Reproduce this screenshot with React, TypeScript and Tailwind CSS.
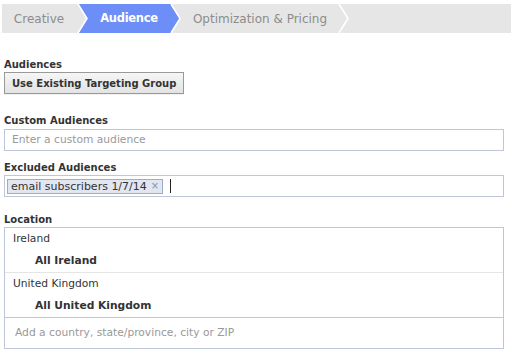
const font = { fontFamily: '"DejaVu Sans", "Lucida Grande", sans-serif' }

function SepInto({ fill }: { fill: string }) {
  // separator whose right side is filled (active segment starts here)
  return (
    <svg width="12" height="29" viewBox="0 0 12 29" className="shrink-0 block">
      <polygon points="2,0 12,0 12,29 2,29 11,14.5" fill={fill} />
      <polyline points="2,0 11,14.5 2,29" fill="none" stroke="#fff" strokeWidth="1.6" />
    </svg>
  )
}

function SepOut({ fill }: { fill: string }) {
  // separator whose left side is filled (active segment ends here)
  return (
    <svg width="12" height="29" viewBox="0 0 12 29" className="shrink-0 block">
      {fill !== 'none' && <polygon points="0,0 1,0 10,14.5 1,29 0,29" fill={fill} />}
      <polyline points="1,0 10,14.5 1,29" fill="none" stroke="#fff" strokeWidth="1.6" />
    </svg>
  )
}

export default function App() {
  return (
    <div className="w-[511px] h-[356px] bg-white text-[#333] overflow-hidden" style={font}>
      {/* Steps */}
      <div className="mt-[4px] ml-[2px] h-[29px] bg-[#e6e6e6] flex items-stretch text-[12px]">
        <div className="w-[74px] flex items-center justify-center text-[#8c8c8c]">Creative</div>
        <SepInto fill="#6c8ef6" />
        <div className="w-[82px] flex items-center justify-center bg-[#6c8ef6] text-white font-bold text-[11.5px] tracking-[-0.3px]">Audience</div>
        <SepOut fill="#6c8ef6" />
        <div className="w-[156px] flex items-center justify-center text-[#8c8c8c]">Optimization &amp; Pricing</div>
        <SepOut fill="none" />
      </div>

      <div className="px-[4px] text-[10.7px]">
        <div className="mt-[25px] font-bold text-[10px] leading-[14px]">Audiences</div>
        <button className="h-[22px] px-[7px] border border-[#999] bg-gradient-to-b from-[#f6f6f6] to-[#e3e3e3] font-bold text-[10px] text-[#333] shadow-[0_1px_0_rgba(0,0,0,0.05)]">
          Use Existing Targeting Group
        </button>

        <div className="mt-[20px] font-bold text-[10px] leading-[14px]">Custom Audiences</div>
        <div className="mt-[1px] w-[500px] h-[22px] border border-[#bdc7d8] flex items-center px-[7px] text-[#999]">
          Enter a custom audience
        </div>

        <div className="mt-[10px] font-bold text-[10px] leading-[14px]">Excluded Audiences</div>
        <div className="w-[500px] h-[22px] border border-[#bdc7d8] flex items-center px-[2px]">
          <span className="h-[15px] flex items-center gap-[4px] px-[3px] bg-[#e2e6f0] border border-[#9dacc9] text-[#333] text-[11px] leading-none">
            email subscribers 1/7/14
            <span className="text-[#9aa6bf] text-[10px] font-bold">×</span>
          </span>
          <span className="ml-[7px] w-px h-[14px] bg-[#222]" />
        </div>

        <div className="mt-[16px] font-bold text-[10px] leading-[14px]">Location</div>
        <div className="w-[500px] border border-[#bdc7d8]">
          <div className="h-[45px] flex flex-col border-b border-[#e5e5e5]">
            <div className="h-[22px] flex items-center pl-[8px]">Ireland</div>
            <div className="h-[22px] flex items-center pl-[30px] font-bold">All Ireland</div>
          </div>
          <div className="h-[45px] flex flex-col border-b border-[#bdc7d8]">
            <div className="h-[22px] flex items-center pl-[8px]">United Kingdom</div>
            <div className="h-[22px] flex items-center pl-[30px] font-bold">All United Kingdom</div>
          </div>
          <div className="h-[30px] flex items-center pl-[10px] text-[#999]">
            Add a country, state/province, city or ZIP
          </div>
        </div>
      </div>
    </div>
  )
}
